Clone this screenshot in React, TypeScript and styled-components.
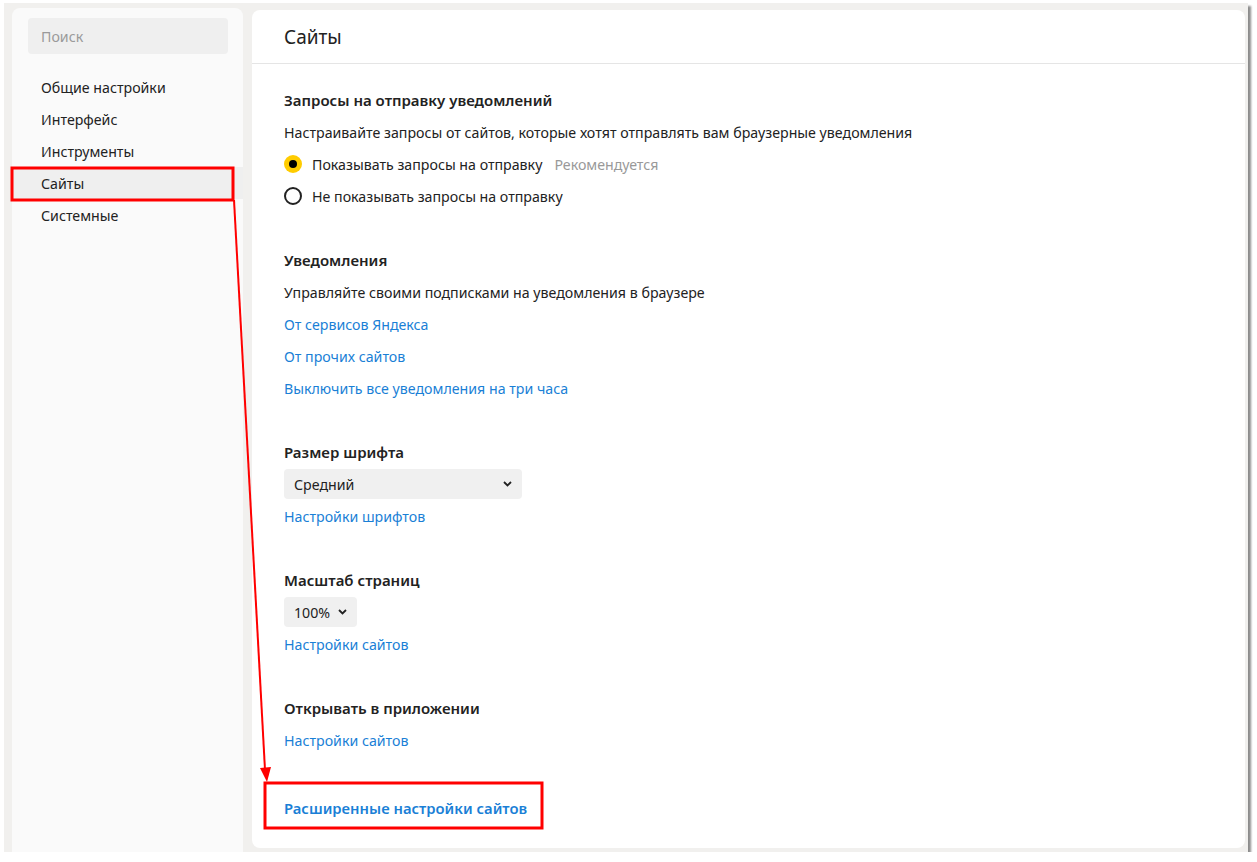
import React from "react";
import styled, { createGlobalStyle } from "styled-components";

const GlobalStyle = createGlobalStyle`
  html, body {
    margin: 0;
    padding: 0;
    background: #ffffff;
  }
  body {
    font-family: "Noto Sans", "Open Sans", Arial, sans-serif;
    color: #222222;
  }
`;

const Shot = styled.div`
  position: relative;
  width: 1244px;
  height: 849px;
  margin: 3px 0 0 4px;
  background: #f1f0ee;
  box-shadow: 3px 3px 2px rgba(0, 0, 0, 0.45);
  display: flex;
  gap: 9px;
  padding: 5px 3px 0 8px;
  box-sizing: border-box;
`;

const Sidebar = styled.aside`
  width: 231px;
  flex-shrink: 0;
  background: #fafafa;
  border-radius: 8px 8px 0 0;
  padding-top: 10px;
`;

const Search = styled.div`
  margin: 0 15px 17px 16px;
  height: 36px;
  border-radius: 4px;
  background: #efefef;
  color: #9a9a9a;
  font-size: 14.2px;
  display: flex;
  align-items: center;
  padding-left: 13px;
`;

const NavList = styled.nav`
  display: flex;
  flex-direction: column;
`;

const NavItem = styled.div<{ $active?: boolean }>`
  height: 32px;
  display: flex;
  align-items: center;
  padding-left: 29px;
  font-size: 14.2px;
  color: #222;
  background: ${(p) => (p.$active ? "#efefef" : "transparent")};
`;

const Main = styled.main`
  flex: 1;
  background: #ffffff;
  border-radius: 8px;
  margin-top: 2px;
  margin-bottom: 4px;
  display: flex;
  flex-direction: column;
`;

const Header = styled.header`
  height: 53px;
  border-bottom: 1px solid #e5e5e5;
  display: flex;
  align-items: center;
  padding-left: 32px;
  font-size: 19px;
  color: #222;
`;

const Content = styled.div`
  padding: 20px 32px 0 32px;
  display: flex;
  flex-direction: column;
  gap: 32px;
`;

const Section = styled.section<{ $extra?: number }>`
  display: flex;
  flex-direction: column;
  margin-top: ${(p) => p.$extra ?? 0}px;
`;

const Row = styled.div`
  height: 32px;
  display: flex;
  align-items: center;
  font-size: 14.2px;
`;

const Heading = styled(Row)`
  font-size: 15px;
  font-weight: 600;
`;

const Link = styled(Row)<{ $bold?: boolean }>`
  color: #1a7fd6;
  font-size: ${(p) => (p.$bold ? "14.8px" : "14.2px")};
  font-weight: ${(p) => (p.$bold ? 600 : 400)};
`;

const Radio = styled.span<{ $checked?: boolean }>`
  width: 18px;
  height: 18px;
  border-radius: 50%;
  box-sizing: border-box;
  margin-right: 10px;
  display: flex;
  align-items: center;
  justify-content: center;
  background: ${(p) => (p.$checked ? "#ffcc00" : "#fff")};
  border: ${(p) => (p.$checked ? "none" : "2px solid #222")};
  &::after {
    content: "";
    display: ${(p) => (p.$checked ? "block" : "none")};
    width: 8px;
    height: 8px;
    border-radius: 50%;
    background: #000;
  }
`;

const Hint = styled.span`
  color: #999;
  margin-left: 12px;
`;

const Select = styled.div<{ $width: number }>`
  width: ${(p) => p.$width}px;
  height: 30px;
  box-sizing: border-box;
  border-radius: 4px;
  background: #f0f0f0;
  display: flex;
  align-items: center;
  justify-content: space-between;
  padding: 0 10px 0 10px;
  font-size: 14.2px;
`;

const SelectRow = styled.div`
  height: 32px;
  display: flex;
  align-items: center;
`;

const Overlay = styled.svg`
  position: absolute;
  left: -4px;
  top: -3px;
  pointer-events: none;
`;

function Chevron() {
  return (
    <svg width="9" height="6" viewBox="0 0 9 6">
      <path d="M1 1 L4.5 4.5 L8 1" fill="none" stroke="#222" strokeWidth="1.8" />
    </svg>
  );
}

const nav = ["Общие настройки", "Интерфейс", "Инструменты", "Сайты", "Системные"];

export default function App() {
  return (
    <>
      <GlobalStyle />
      <Shot>
        <Sidebar>
          <Search>Поиск</Search>
          <NavList>
            {nav.map((n) => (
              <NavItem key={n} $active={n === "Сайты"}>
                {n}
              </NavItem>
            ))}
          </NavList>
        </Sidebar>
        <Main>
          <Header>Сайты</Header>
          <Content>
            <Section>
              <Heading>Запросы на отправку уведомлений</Heading>
              <Row>Настраивайте запросы от сайтов, которые хотят отправлять вам браузерные уведомления</Row>
              <Row>
                <Radio $checked />
                Показывать запросы на отправку
                <Hint>Рекомендуется</Hint>
              </Row>
              <Row>
                <Radio />
                Не показывать запросы на отправку
              </Row>
            </Section>
            <Section>
              <Heading>Уведомления</Heading>
              <Row>Управляйте своими подписками на уведомления в браузере</Row>
              <Link>От сервисов Яндекса</Link>
              <Link>От прочих сайтов</Link>
              <Link>Выключить все уведомления на три часа</Link>
            </Section>
            <Section>
              <Heading>Размер шрифта</Heading>
              <SelectRow>
                <Select $width={238}>
                  Средний
                  <Chevron />
                </Select>
              </SelectRow>
              <Link>Настройки шрифтов</Link>
            </Section>
            <Section>
              <Heading>Масштаб страниц</Heading>
              <SelectRow>
                <Select $width={73}>
                  100%
                  <Chevron />
                </Select>
              </SelectRow>
              <Link>Настройки сайтов</Link>
            </Section>
            <Section>
              <Heading>Открывать в приложении</Heading>
              <Link>Настройки сайтов</Link>
            </Section>
            <Section $extra={4}>
              <Link $bold>Расширенные настройки сайтов</Link>
            </Section>
          </Content>
        </Main>
        <Overlay width="1257" height="862" viewBox="0 0 1257 862">
          <rect x="12" y="168" width="221" height="32" fill="none" stroke="#ff0000" strokeWidth="3" />
          <line x1="234" y1="200" x2="265" y2="770" stroke="#ff0000" strokeWidth="2" />
          <path d="M260 768 L271 767 L267 782 Z" fill="#ff0000" />
          <rect x="265" y="783" width="277" height="45" fill="none" stroke="#ff0000" strokeWidth="3" />
        </Overlay>
      </Shot>
    </>
  );
}
